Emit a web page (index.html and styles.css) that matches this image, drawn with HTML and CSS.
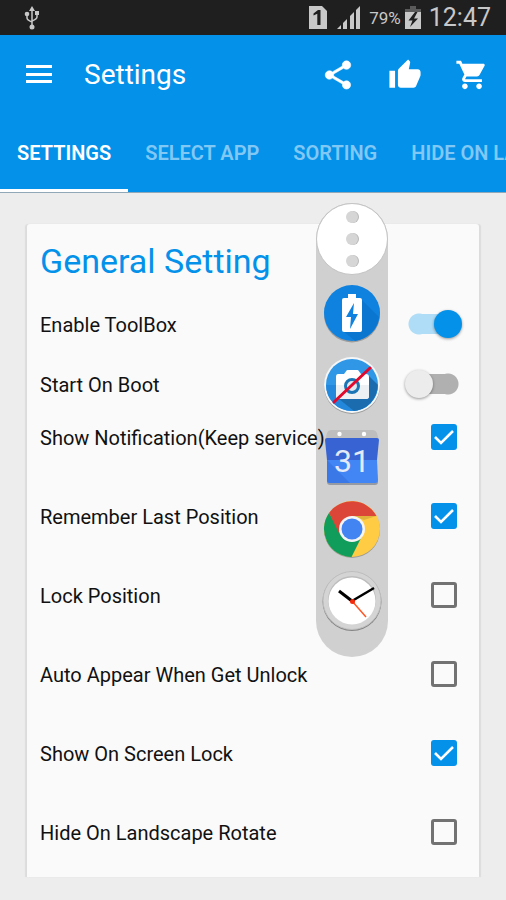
FILE: index.html
```
<!DOCTYPE html>
<html lang="en">
<head>
  <meta charset="UTF-8">
  <meta name="viewport" content="width=device-width, initial-scale=1">
  <title>Settings</title>
  <link rel="stylesheet" href="styles.css">
</head>
<body>
  <div class="status-bar">
    <svg width="16" height="26" viewBox="0 0 16 26" fill="none" stroke="#c8c8c8" stroke-width="1.5">
      <path d="M8 4v18M3 9v4q0 2 5 4M13 8v4q0 2-5 4"/>
      <path d="M8 1l3 5H5zM11 6h4v4h-4z" fill="#c8c8c8" stroke="none"/>
      <circle cx="3" cy="9" r="2.3" fill="#c8c8c8" stroke="none"/>
      <circle cx="8" cy="22" r="2.5" fill="#c8c8c8" stroke="none"/>
    </svg>
    <div class="status-right">
      <svg class="sim" width="18" height="23" viewBox="0 0 18 23">
        <path d="M0 0h13l5 5v18H0z" fill="#c8c8c8"/>
        <path d="M4.500 7.500L9 4h2.500v15H8.300V7.800L4.500 9.500z" fill="#1f1f1f"/>
      </svg>
      <svg class="signal" width="24" height="23" viewBox="0 0 24 23" fill="#c8c8c8">
        <path d="M0 23l4-4v4zM6 17l4-4v10H6zM13 10l4-4v17h-4zM19 4l4-4v23h-4z"/>
      </svg>
      <span class="percent">79%</span>
      <svg class="battery" width="16" height="23" viewBox="0 0 16 23">
        <path d="M5 0h6v3h5v4H0V3h5z" fill="#5a5a5a"/>
        <path d="M0 6h16v17H0z" fill="#c8c8c8"/>
        <path d="M10 6L3.500 14.500h4L5 21l8-8.500H9L12.500 6z" fill="#1f1f1f"/>
      </svg>
      <span class="clock">12:47</span>
    </div>
  </div>

  <header>
    <div class="toolbar">
      <button class="icon-btn" aria-label="Menu">
        <svg width="26" height="20" viewBox="0 0 26 20" fill="#fff"><path d="M0 0h26v3H0zM0 8h26v3H0zM0 15h26v3H0z"/></svg>
      </button>
      <h1>Settings</h1>
      <div class="actions">
        <button class="icon-btn" aria-label="Share">
          <svg width="34" height="34" viewBox="0 0 24 24" fill="#fff"><path d="M18 16.080c-.76 0-1.440.3-1.960.77L8.910 12.700c.05-.23.09-.46.09-.7s-.04-.47-.09-.7l7.050-4.110c.54.5 1.250.81 2.040.81 1.660 0 3-1.340 3-3s-1.340-3-3-3-3 1.340-3 3c0 .24.04.47.09.7L8.040 9.810C7.500 9.310 6.790 9 6 9c-1.660 0-3 1.340-3 3s1.340 3 3 3c.79 0 1.500-.31 2.040-.81l7.120 4.160c-.05.21-.08.43-.08.65 0 1.610 1.310 2.920 2.920 2.920s2.920-1.310 2.920-2.920-1.310-2.920-2.920-2.920z" stroke="#fff" stroke-width=".4"/></svg>
        </button>
        <button class="icon-btn" aria-label="Like">
          <svg width="34" height="34" viewBox="0 0 24 24" fill="#fff"><path d="M1 21h4V9H1v12zm22-11c0-1.100-.9-2-2-2h-6.310l.95-4.570.03-.32c0-.41-.17-.79-.44-1.060L14.170 1 7.590 7.590C7.220 7.950 7 8.450 7 9v10c0 1.100.9 2 2 2h9c.83 0 1.540-.5 1.840-1.220l3.020-7.050c.09-.23.14-.47.14-.73v-2z"/></svg>
        </button>
        <button class="icon-btn" aria-label="Cart">
          <svg width="34" height="34" viewBox="0 0 24 24" fill="#fff"><path d="M7 18c-1.100 0-1.990.9-1.990 2S5.900 22 7 22s2-.9 2-2-.9-2-2-2zM1 2v2h2l3.600 7.590-1.350 2.450c-.16.28-.25.61-.25.96 0 1.100.9 2 2 2h12v-2H7.420c-.14 0-.25-.11-.25-.25l.03-.12.9-1.630h7.450c.75 0 1.410-.41 1.750-1.030l3.580-6.490c.08-.14.12-.31.12-.48 0-.55-.45-1-1-1H5.210l-.94-2H1zm16 16c-1.100 0-1.990.9-1.990 2s.89 2 1.990 2 2-.9 2-2-.9-2-2-2z"/></svg>
        </button>
      </div>
    </div>
    <nav class="tabs">
      <a href="#settings" class="tab active">SETTINGS</a>
      <a href="#select" class="tab">SELECT APP</a>
      <a href="#sorting" class="tab">SORTING</a>
      <a href="#hide" class="tab">HIDE ON LANDSCAPE</a>
    </nav>
  </header>

  <main>
    <section class="card" id="settings">
      <h2>General Setting</h2>
      <div class="row switch-row">
        <label for="enable">Enable ToolBox</label>
        <input type="checkbox" class="switch" id="enable" checked>
      </div>
      <div class="row switch-row">
        <label for="boot">Start On Boot</label>
        <input type="checkbox" class="switch" id="boot">
      </div>
      <div class="checks">
        <div class="row">
          <label for="notification">Show Notification(Keep service)</label>
          <input type="checkbox" class="check" id="notification" checked>
        </div>
        <div class="row">
          <label for="remember">Remember Last Position</label>
          <input type="checkbox" class="check" id="remember" checked>
        </div>
        <div class="row">
          <label for="lock">Lock Position</label>
          <input type="checkbox" class="check" id="lock">
        </div>
        <div class="row">
          <label for="unlock">Auto Appear When Get Unlock</label>
          <input type="checkbox" class="check" id="unlock">
        </div>
        <div class="row">
          <label for="screenlock">Show On Screen Lock</label>
          <input type="checkbox" class="check" id="screenlock" checked>
        </div>
        <div class="row">
          <label for="landscape">Hide On Landscape Rotate</label>
          <input type="checkbox" class="check" id="landscape">
        </div>
      </div>
    </section>
  </main>

  <!-- floating toolbox, drawn over the page -->
  <aside class="toolbox">
    <button class="handle" aria-label="Toolbox"><i></i><i></i><i></i></button>
    <button class="app" aria-label="Battery">
      <svg width="60" height="60" viewBox="0 0 60 60">
        <circle cx="30" cy="31.500" r="28" fill="#000" opacity=".25"/>
        <circle cx="30" cy="30" r="28" fill="#0f82df"/>
        <path d="M38 15L57 34A28 28 0 0 1 33 58L21 48z" fill="#0b76cf"/>
        <path d="M26 11h8v4h4q2 0 2 2v30q0 2-2 2H22q-2 0-2-2V17q0-2 2-2h4z" fill="#fff"/>
        <path d="M32 20L24 34h5l-1 12 8-15h-5z" fill="#0f82df"/>
      </svg>
    </button>
    <button class="app" aria-label="Screenshot">
      <svg width="60" height="60" viewBox="0 0 60 60">
        <circle cx="30" cy="31" r="28" fill="#000" opacity=".25"/>
        <circle cx="30" cy="30" r="28" fill="#f4f6f8"/>
        <circle cx="30" cy="30" r="26" fill="#2f97e6"/>
        <path d="M4 30h52a26 26 0 0 1-52 0z" fill="#2388dc"/>
        <path d="M46 20L55.500 29.500A26 26 0 0 1 32 56L17 44z" fill="#1a6cae"/>
        <path d="M16 19h6l3-4h11l3 4h5q3 0 3 3v19q0 3-3 3H17q-3 0-3-3V22q0-3 2-3z" fill="#fff"/>
        <path d="M14 30h33v11q0 3-3 3H17q-3 0-3-3z" fill="#eef1f4"/>
        <circle cx="30" cy="31" r="6.500" fill="#dfe8ef" stroke="#1975b5" stroke-width="3"/>
        <path d="M12 47L48 13" stroke="#e3092c" stroke-width="3" stroke-linecap="round"/>
      </svg>
    </button>
    <button class="app" aria-label="Calendar">
      <svg width="60" height="60" viewBox="0 0 60 60">
        <path d="M4 13q0-10 5-10h42q5 0 5 10z" fill="#bebebe"/>
        <circle cx="17.500" cy="7" r="2.200" fill="#fff"/>
        <circle cx="42" cy="7" r="2.200" fill="#fff"/>
        <path d="M5 54h51v1q0 3-3 3H8q-3 0-3-3z" fill="#969aa3"/>
        <path d="M5 11h50q2 0 2 2l-2 20H5L3 13q0-2 2-2z" fill="#3864d3"/>
        <path d="M5 33h50l1 20q0 3-3 3H8q-3 0-3-3z" fill="#4285f4"/>
        <path d="M5 33l23 23H8q-3 0-3-3z" fill="#3b78e7"/>
        <text x="30" y="45" class="cal-day">31</text>
      </svg>
    </button>
    <button class="app" aria-label="Chrome">
      <svg width="60" height="60" viewBox="0 0 60 60">
        <circle cx="30" cy="31" r="28" fill="#000" opacity=".25"/>
        <circle cx="30" cy="30" r="28" fill="#ffcc44"/>
        <path d="M30 30L40 37 29.500 58A28 28 0 0 1 7 14L19 34z" fill="#109c5a"/>
        <path d="M7 14A28 28 0 0 1 54.500 17H30L17 34z" fill="#dc4638"/>
        <path d="M30 17h24.500L42 21z" fill="#000" opacity=".12"/>
        <circle cx="30" cy="30" r="13" fill="#f5f5f5"/>
        <circle cx="30" cy="30" r="10.500" fill="#4384f3"/>
      </svg>
    </button>
    <button class="app" aria-label="Clock">
      <svg width="60" height="60" viewBox="0 0 60 60">
        <circle cx="30" cy="30.500" r="29.500" fill="#858585"/>
        <circle cx="30" cy="29.500" r="29" fill="#d4d4d4" stroke="#bebebe"/>
        <circle cx="30" cy="29" r="24" fill="#bdbdbd"/>
        <circle cx="30" cy="30" r="23.500" fill="#fff"/>
        <path d="M17 20l13 10" stroke="#000" stroke-width="3"/>
        <path d="M30 30l22-13" stroke="#000" stroke-width="2.500"/>
        <path d="M30 30l14 16" stroke="#f52" stroke-width="1.500"/>
        <circle cx="30.500" cy="30.500" r="2.500" fill="#f32b0c"/>
      </svg>
    </button>
  </aside>
</body>
</html>
```
FILE: styles.css
```
* {
  box-sizing: border-box;
}
body {
  margin: 0;
  position: relative;
  background-color: #ededed;
  color: #111;
  font-family: Roboto, sans-serif;
  overflow-x: hidden;
}
button {
  border: 0;
  padding: 0;
  background: none;
  cursor: pointer;
}
svg {
  display: block;
}

.status-bar {
  display: flex;
  justify-content: space-between;
  align-items: center;
  height: 35px;
  padding: 0 15px 0 24px;
  background-color: #1f1f1f;
  color: #c8c8c8;
}
.status-right {
  display: flex;
  align-items: center;
}
.signal {
  margin: 0 8px 0 10px;
}
.percent {
  font-size: 17px;
}
.battery {
  margin: 0 8px 0 4px;
}
.clock {
  font-size: 25px;
}

header {
  background-color: #0391ea;
  border-bottom: 1px solid #90a8b8;
}
.toolbar {
  display: flex;
  align-items: center;
  height: 79px;
  padding: 0 17px 0 26px;
}
.toolbar h1 {
  margin: 0 0 0 32px;
  font-size: 28px;
  font-weight: 400;
  color: #fff;
}
.actions {
  display: flex;
  gap: 33px;
  margin-left: auto;
}
.tabs {
  display: flex;
  height: 78px;
  overflow: hidden;
}
.tab {
  flex: none;
  padding: 0 17px;
  border-bottom: 3px solid transparent;
  color: #81c8f5;
  font-size: 20px;
  font-weight: 600;
  line-height: 78px;
  text-decoration: none;
}
.tab.active {
  color: #fff;
  border-color: #fff;
}

main {
  padding: 31px 27px 23px;
}
.card {
  padding: 14px 17px 22px 13px;
  background-color: #fafafa;
  border-radius: 3px 3px 0 0;
  box-shadow: 2px 0 1px #dcdcdc, -2px 0 1px #dcdcdc;
}
.card h2 {
  margin: 0 0 10px;
  font-size: 34px;
  font-weight: 400;
  line-height: 46px;
  color: #0391ea;
}
.row {
  display: flex;
  justify-content: space-between;
  align-items: center;
  height: 46px;
  font-size: 20px;
}
.row label {
  padding-top: 2px;
}
.switch-row {
  height: 60px;
}
.checks {
  display: grid;
  gap: 33px;
  padding-right: 5px;
}

.check {
  appearance: none;
  width: 26px;
  height: 26px;
  margin: 0;
  border: 3px solid #727272;
  border-radius: 3px;
}
.check:checked {
  border: 0;
  background: #0391ea url("data:image/svg+xml,%3Csvg xmlns='http://www.w3.org/2000/svg' viewBox='0 0 26 26'%3E%3Cpath d='M4 13l6 6L22 7' fill='none' stroke='white' stroke-width='2.600'/%3E%3C/svg%3E");
}
.switch {
  appearance: none;
  display: flex;
  align-items: center;
  width: 57px;
  height: 28px;
  margin: 0;
  background: linear-gradient(#b0b0b0, #b0b0b0) center / 30px 20px no-repeat,
    radial-gradient(circle, #b0b0b0 10px, transparent 11px) right 3px center / 22px 22px no-repeat;
}
.switch::before {
  content: "";
  width: 28px;
  height: 28px;
  border-radius: 50%;
  background-color: #ececec;
  box-shadow: 0 1px 3px rgba(0, 0, 0, .4);
}
.switch:checked {
  justify-content: flex-end;
  background: linear-gradient(#afdcf6, #afdcf6) center / 30px 20px no-repeat,
    radial-gradient(circle, #afdcf6 10px, transparent 11px) left 3px center / 22px 22px no-repeat;
}
.switch:checked::before {
  background-color: #0391ea;
}

.toolbox {
  position: absolute;
  top: 203px;
  right: 118px;
  display: flex;
  flex-direction: column;
  align-items: center;
  gap: 12px;
  width: 72px;
  padding-bottom: 26px;
  border-radius: 36px;
  background-color: rgba(0, 0, 0, .165);
}
.handle {
  display: flex;
  flex-direction: column;
  align-items: center;
  justify-content: center;
  gap: 10px;
  width: 72px;
  height: 72px;
  margin-bottom: -4px;
  border: 1px solid #c4c4c4;
  border-radius: 50%;
  background-color: #fff;
}
.handle i {
  width: 12px;
  height: 12px;
  border-radius: 50%;
  background-color: #d6d6d6;
  box-shadow: 1px 0 0 #b8b8b8;
}
.cal-day {
  font-family: Roboto, sans-serif;
  font-size: 32px;
  fill: #e4eaf8;
  text-anchor: middle;
}
```
